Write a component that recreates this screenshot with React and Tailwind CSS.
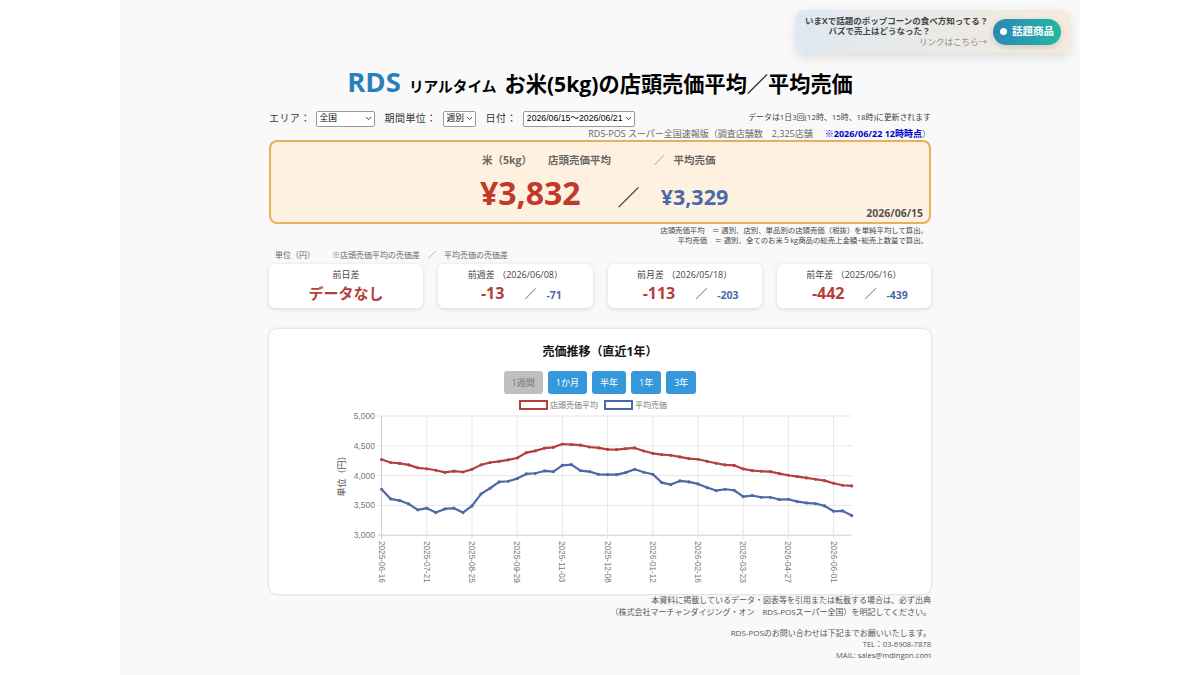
import { ChevronDown } from 'lucide-react'

const red = [4270, 4220, 4205, 4180, 4130, 4115, 4090, 4055, 4075, 4060, 4105, 4180, 4220, 4240, 4265, 4295, 4385, 4415, 4460, 4475, 4530, 4520, 4510, 4480, 4465, 4441, 4436, 4452, 4464, 4413, 4374, 4352, 4341, 4313, 4285, 4274, 4240, 4207, 4179, 4173, 4112, 4084, 4073, 4067, 4034, 4006, 3983, 3961, 3939, 3916, 3872, 3838, 3827]
const blue = [3771, 3609, 3581, 3525, 3425, 3453, 3380, 3441, 3453, 3380, 3492, 3693, 3788, 3894, 3905, 3950, 4028, 4039, 4078, 4067, 4173, 4184, 4084, 4067, 4022, 4017, 4017, 4050, 4106, 4056, 4022, 3883, 3849, 3911, 3894, 3860, 3799, 3749, 3771, 3754, 3648, 3665, 3637, 3637, 3598, 3603, 3564, 3542, 3531, 3492, 3402, 3408, 3330]
const ticks = ['2025-06-16', '2025-07-21', '2025-08-25', '2025-09-29', '2025-11-03', '2025-12-08', '2026-01-12', '2026-02-16', '2026-03-23', '2026-04-27', '2026-06-01']
const yTicks = [5000, 4500, 4000, 3500, 3000]

const sans = { fontFamily: '"Open Sans", "Noto Sans CJK JP", sans-serif' }
const chartFont = '"Liberation Sans", "Noto Sans CJK JP", sans-serif'

// chart coordinates are relative to the svg box (page x - 330, page y - 400)
const px = (i) => 51.6 + i * 9.04
const py = (v) => 16 + ((5000 - v) / 2000) * 119.2

function Series({ data, color }) {
  const points = data.map((v, i) => `${px(i)},${py(v)}`).join(' ')
  return (
    <g>
      <polyline points={points} fill="none" stroke={color} strokeWidth="2.2" strokeLinejoin="round" />
      {data.map((v, i) => (
        <circle key={i} cx={px(i)} cy={py(v)} r="1.6" fill={color} />
      ))}
    </g>
  )
}

function PriceChart() {
  return (
    <svg width="540" height="190" viewBox="0 0 540 190" className="block">
      <rect x="190" y="1" width="27" height="8" fill="#fff" stroke="#b5403a" strokeWidth="2" />
      <text x="220" y="8" fontSize="8" fill="#777" fontFamily={chartFont}>店頭売価平均</text>
      <rect x="275" y="1" width="27" height="8" fill="#fff" stroke="#4a69a8" strokeWidth="2" />
      <text x="305" y="8" fontSize="8" fill="#777" fontFamily={chartFont}>平均売価</text>

      {yTicks.map((v) => (
        <g key={v}>
          <line x1="48" x2="522" y1={py(v)} y2={py(v)} stroke={v === 3000 ? '#cfcfcf' : '#e6e6e6'} strokeWidth="1" />
          <text x="45" y={py(v) + 3} fontSize="8.5" fill="#777" textAnchor="end" fontFamily={chartFont}>
            {v.toLocaleString('en-US')}
          </text>
        </g>
      ))}
      {ticks.map((t, i) => {
        const x = px(i * 5)
        return (
          <g key={t}>
            <line x1={x} x2={x} y1="16" y2="139" stroke={i === 0 ? '#cfcfcf' : '#e6e6e6'} strokeWidth="1" />
            <text
              transform={`translate(${x - 3} 141) rotate(90)`}
              fontSize="8.2"
              fill="#777"
              fontFamily={chartFont}
            >
              {t}
            </text>
          </g>
        )
      })}
      <text
        transform="translate(15 74) rotate(-90)"
        fontSize="9"
        fill="#555"
        textAnchor="middle"
        fontFamily={chartFont}
      >
        単位（円）
      </text>

      <Series data={red} color="#b5403a" />
      <Series data={blue} color="#4a69a8" />
    </svg>
  )
}

function DiffCard({ title, main, sub }) {
  return (
    <div className="h-[44px] rounded-md bg-white pt-[4px] shadow-[0_1px_4px_rgba(0,0,0,0.14)]">
      <div className="text-center text-[9px] leading-[13px] text-[#444]">{title}</div>
      {sub ? (
        <div className="mt-[2px] flex items-baseline justify-center pl-[12px] font-bold">
          <span className="text-[16px] leading-[20px] text-[#b5403a]">{main}</span>
          <span className="mr-[10px] ml-[20px] text-[12px] font-normal text-[#555]">／</span>
          <span className="text-[10.5px] text-[#4a69a8]">{sub}</span>
        </div>
      ) : (
        <div className="mt-[2px] text-center text-[15px] leading-[20px] font-bold text-[#b5403a]">{main}</div>
      )}
    </div>
  )
}

function RangeButton({ label, active }) {
  return (
    <button
      type="button"
      className={`h-[23px] rounded-[3px] px-[8px] text-[9px] ${active ? 'bg-[#bfbfbf] text-[#777]' : 'bg-[#3498db] text-white'}`}
    >
      {label}
    </button>
  )
}

function FilterSelect({ label, className, value }) {
  return (
    <div className={`relative h-[16px] ${className}`}>
      <select className="h-full w-full appearance-none rounded-[2px] border border-[#999] bg-white pl-[3px] font-['Liberation_Sans','Noto_Sans_CJK_JP',sans-serif] text-[8.7px] text-black" aria-label={label}>
        <option>{value}</option>
      </select>
      <ChevronDown size={9} strokeWidth={2.5} className="pointer-events-none absolute top-[4px] right-[2px] text-[#333]" />
    </div>
  )
}

export default function App() {
  return (
    <div className="min-h-screen bg-white" style={sans}>
      <div className="relative mx-auto h-[675px] w-[960px] overflow-hidden bg-[#f9f9f9] px-[149px] pt-[61px]">
        {/* promo card */}
        <div className="absolute top-[10px] left-[676px] flex h-[43px] w-[274px] items-center rounded-lg bg-gradient-to-r from-[#dfe8f0] to-[#f4ebdd] pl-[9px] shadow-[0_4px_12px_rgba(0,0,0,0.12)]">
          <div className="w-[182px] shrink-0 text-center text-[8.5px] leading-[10.5px] font-bold whitespace-nowrap text-[#444]">
            <div>いまXで話題のポップコーンの食べ方知ってる？</div>
            <div className="pr-[33px]">バズで売上はどうなった？</div>
            <div className="text-right font-normal text-[#888]">リンクはこちら→</div>
          </div>
          <div className="ml-[6px] flex h-[26px] w-[68px] shrink-0 items-center justify-center gap-[5px] rounded-full bg-gradient-to-r from-[#2d86b5] to-[#20b8a0] text-[10.5px] font-bold text-white shadow-[0_2px_6px_rgba(0,0,0,0.15)]">
            <span className="h-[7px] w-[7px] rounded-full bg-white" />
            話題商品
          </div>
        </div>

        {/* title */}
        <h1 className="flex h-[36px] items-baseline justify-center whitespace-nowrap text-black">
          <span className="text-[27.5px] font-bold text-[#2980b9]">RDS</span>
          <span className="ml-[8px] text-[14.7px] font-bold">リアルタイム</span>
          <span className="ml-[8px] text-[21.2px] font-bold">お米(5kg)の店頭売価平均／平均売価</span>
        </h1>

        {/* filters */}
        <div className="mt-[12px] flex h-[18px] items-center text-[10px] whitespace-nowrap text-[#333]">
          <span className="tracking-[0.4px]">エリア：</span>
          <FilterSelect label="エリア" value="全国" className="ml-[5px] w-[59px]" />
          <span className="ml-[10px] tracking-[0.4px]">期間単位：</span>
          <FilterSelect label="期間単位" value="週別" className="ml-[6px] w-[33px]" />
          <span className="ml-[10px] tracking-[0.4px]">日付：</span>
          <FilterSelect label="日付" value="2026/06/15～2026/06/21" className="ml-[6px] w-[112px]" />
          <span className="ml-auto text-[7.9px] text-[#444]">データは1日3回(12時、15時、18時)に更新されます</span>
        </div>

        <div className="h-[13px] text-right text-[9px] leading-[13px] whitespace-nowrap text-[#666]">
          RDS-POS スーパー全国速報版（調査店舗数　2,325店舗
          <span className="ml-[12px] font-bold text-[#0000cc]">※2026/06/22 12時時点</span>）
        </div>

        {/* summary panel */}
        <div className="relative h-[84px] rounded-lg border-2 border-[#eaaf5c] bg-[#fff1e0] pt-[11px] pl-[211px]">
          <div className="flex text-[10.5px] leading-[15px] font-bold whitespace-nowrap text-[#666]">
            <span>米（5kg）</span>
            <span className="ml-[16px]">店頭売価平均</span>
            <span className="ml-[43px] font-normal">／</span>
            <span className="ml-[9px]">平均売価</span>
          </div>
          <div className="mt-[1px] ml-[-2px] flex items-baseline whitespace-nowrap">
            <span className="text-[32px] font-bold text-[#c0392b]">¥3,832</span>
            <span className="ml-[37px] text-[22px] text-[#222]">／</span>
            <span className="ml-[21px] text-[21.5px] font-bold text-[#4a69a8]">¥3,329</span>
          </div>
          <span className="absolute right-[6px] bottom-0 text-[10.5px] font-bold text-[#555]">2026/06/15</span>
        </div>

        {/* definitions */}
        <div className="mt-[1px] h-[22px] pr-[3px] text-right text-[7.4px] leading-[10px] whitespace-nowrap text-[#444]">
          <div>店頭売価平均　＝ 週別、店別、単品別の店頭売価（税抜）を単純平均して算出。</div>
          <div>平均売価　＝ 週別、全てのお米５kg商品の総売上金額÷総売上数量で算出。</div>
        </div>

        <div className="mt-[1px] flex h-[13px] pl-[6px] text-[8px] leading-[13px] whitespace-nowrap text-[#666]">
          <span>単位（円）</span>
          <span className="ml-[17px]">※店頭売価平均の売価差　／　平均売価の売価差</span>
        </div>

        {/* diff cards */}
        <div className="mt-[3px] grid grid-cols-4 gap-[15px]">
          <DiffCard title="前日差" main="データなし" />
          <DiffCard title="前週差 （2026/06/08）" main="-13" sub="-71" />
          <DiffCard title="前月差 （2026/05/18）" main="-113" sub="-203" />
          <DiffCard title="前年差 （2025/06/16）" main="-442" sub="-439" />
        </div>

        {/* chart card */}
        <div className="mt-[21px] flex h-[265px] flex-col items-center rounded-lg bg-white pt-[14px] shadow-[0_0_3px_rgba(0,0,0,0.2)]">
          <div className="text-[12px] leading-[17px] font-bold text-[#111]">売価推移（直近1年）</div>
          <div className="mt-[11px] flex gap-[5px]">
            <RangeButton label="1週間" active />
            <RangeButton label="1か月" />
            <RangeButton label="半年" />
            <RangeButton label="1年" />
            <RangeButton label="3年" />
          </div>
          <div className="mt-[6px] self-start pl-[61px]">
            <PriceChart />
          </div>
        </div>

        {/* footer */}
        <div className="text-right text-[8px] leading-[11.5px] whitespace-nowrap text-[#555]">
          <div>本資料に掲載しているデータ・図表等を引用または転載する場合は、必ず出典</div>
          <div>（株式会社マーチャンダイジング・オン　RDS-POSスーパー全国）を明記してください。</div>
          <div className="mt-[10px]">RDS-POSのお問い合わせは下記までお願いいたします。</div>
          <div className="text-[7.6px]">TEL：03-6908-7878</div>
          <div className="text-[7.6px]">MAIL: sales@mdingon.com</div>
        </div>
      </div>
    </div>
  )
}
